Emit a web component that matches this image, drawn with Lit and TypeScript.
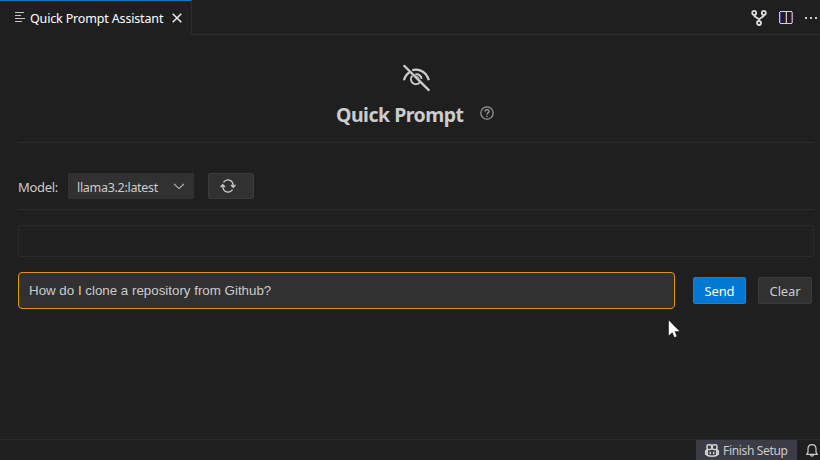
import { LitElement, html, css } from "lit";
import { customElement } from "lit/decorators.js";

@customElement("app-root")
export class AppRoot extends LitElement {
  static styles = css`
    :host {
      display: flex;
      flex-direction: column;
      position: relative;
      width: 820px;
      height: 460px;
      overflow: hidden;
      background: #1f1f1f;
      color: #ccc;
      font: 13px/18px "Noto Sans", "Open Sans", sans-serif;
      white-space: nowrap;
    }
    * { box-sizing: border-box; }
    svg { display: block; flex: none; overflow: visible; }
    .tabs { display: flex; height: 35px; flex: none; }
    .tab {
      display: flex;
      align-items: center;
      width: 192px;
      padding-left: 15px;
      border-top: 1px solid #0078d4;
      border-right: 1px solid #2b2b2b;
      color: #fff;
    }
    .tab-icon { margin-bottom: 2px; }
    .tab-name { width: 134px; margin-left: 5px; padding-top: 2px; font-size: 12.5px; letter-spacing: -0.16px; }
    .close { margin-left: 8px; }
    .actions {
      display: flex;
      flex: 1;
      justify-content: flex-end;
      align-items: center;
      gap: 12px;
      padding: 1px 2px 0 0;
      border-bottom: 1px solid #2b2b2b;
    }
    .main { flex: 1; padding: 29px 6px 0 18px; }
    .logo { margin-left: 385px; }
    .heading { display: flex; margin: 9px 0 0 318px; height: 28px; align-items: center; }
    h1 { margin: 0; width: 144px; font-size: 19.5px; line-height: 28px; font-weight: 700; letter-spacing: -0.5px; }
    .help { margin-bottom: 4px; }
    .rule { height: 1px; background: #2b2b2b; }
    .heading + .rule { margin-top: 13px; }
    .model { display: flex; align-items: center; height: 26px; margin: 30px 0 10px; }
    .model-label { width: 50px; letter-spacing: -0.3px; padding-top: 2px; }
    .select {
      display: flex;
      justify-content: space-between;
      align-items: center;
      width: 126px;
      height: 26px;
      padding: 0 9px;
      background: #313131;
    }
    .select span { font-size: 12.5px; letter-spacing: -0.3px; padding-top: 3px; }
    .button {
      display: flex;
      align-items: center;
      justify-content: center;
      height: 27px;
      border: 1px solid #3c3c3c;
      border-radius: 2px;
      background: #313131;
      padding-top: 1px;
      letter-spacing: -0.15px;
    }
    .refresh { width: 46px; height: 26px; margin-left: 14px; padding: 0 6px 0 0; }
    .answer { height: 32px; margin-top: 15px; border: 1px solid #2b2b2b; border-radius: 3px; }
    .ask { display: flex; align-items: center; margin-top: 15px; }
    .question {
      width: 657px;
      height: 37px;
      padding: 0 10px;
      border: 1px solid #e69500;
      border-radius: 4px;
      background: #313131;
      font: 13.33px/35px "Liberation Sans", Arial, sans-serif;
    }
    .send { width: 53px; margin-left: 18px; background: #0078d4; border-color: #1683d8; color: #fff; }
    .clear { width: 54px; margin-left: 12px; }
    .status {
      display: flex;
      justify-content: flex-end;
      height: 21px;
      border-top: 1px solid #2b2b2b;
      font-size: 12px;
    }
    .setup { display: flex; align-items: center; width: 101px; padding-left: 9px; background: #3b3c45; }
    .setup span { margin-left: 4px; padding-top: 2px; letter-spacing: -0.33px; }
    .bell { margin: 4px 2px 0 9px; }
    .cursor { position: absolute; left: 668px; top: 320px; }
  `;

  render() {
    return html`
      <div class="tabs">
        <div class="tab">
          <svg class="tab-icon" width="10" height="10" viewBox="0 0 10 10" stroke="#c5c5c5" shape-rendering="crispEdges"><path d="M0 .5h9M0 3.5h6M0 6.5h10M0 9.5h7" /></svg>
          <span class="tab-name">Quick Prompt Assistant</span>
          <svg class="close" width="10" height="10" viewBox="0 0 10 10" stroke="#eee" stroke-width="1.5"><path d="M.7.7l8.6 8.6M9.3.7L.7 9.3" /></svg>
        </div>
        <div class="actions">
          <svg width="16" height="16" viewBox="0 0 16 16" fill="none" stroke="#ddd" stroke-width="1.8"><circle cx="3.2" cy="2.9" r="2" /><circle cx="12.8" cy="2.9" r="2" /><circle cx="8" cy="13" r="2" /><path d="M3.5 5v1.2L8 9.2l4.5-3V5M8 9v2" /></svg>
          <svg width="14" height="14" viewBox="0 0 14 14" fill="none"><path d="M1 .5h12M1 12.5h12" stroke="#d4d4d4" /><path d="M.5 1v11M7.5 1v11" stroke="#e0b8dc" /><path d="M1.5 1v11M6.5 1v11M12.5 1v11" stroke="#4a3aa8" /><path d="M13.3 1v11" stroke="#e0b8dc" /></svg>
          <svg width="13" height="4" viewBox="0 0 13 4" fill="#ccc"><path d="M0 1h2v2H0zM5 1h2v2H5zM10 1h2v2h-2z" /></svg>
        </div>
      </div>
      <div class="main">
        <svg class="logo" width="27" height="28" viewBox="0 0 27 28" fill="none" stroke="#ccc" stroke-width="2.3">
          <path d="M.9 16.3C2.2 11.5 4.5 9.4 6.7 8.2M9.3 6.2C16.5 4.3 23.7 8 25.8 16.3" />
          <path d="M9.2 11.8a5 5 0 1 0 7.6 6.6M12.2 10.6c3-1 6.1.9 6.4 4.3" stroke-width="2" />
          <path d="M12.7 12.7c1.2-.7 3.2.2 3.5 2" stroke-width="1" />
          <path d="M.7 1.2l25.6 25.4" />
        </svg>
        <div class="heading">
          <h1>Quick Prompt</h1>
          <svg class="help" width="14" height="14" viewBox="0 0 14 14" fill="none" stroke="#969696" stroke-width="1.3"><circle cx="7" cy="7" r="6.2" /><path d="M5 5.5C5.1 3.2 9 3.2 9 5.4 9 6.9 7 6.8 7 8.4M7 9.7V11" stroke-width="1.5" /></svg>
        </div>
        <div class="rule"></div>
        <div class="model">
          <span class="model-label">Model:</span>
          <div class="select">
            <span>llama3.2:latest</span>
            <svg width="12" height="7" viewBox="0 0 12 7" fill="none" stroke="#bbb" stroke-width="1.1"><path d="M1 .8l5 4.8 5-4.8" /></svg>
          </div>
          <div class="button refresh">
            <svg width="16" height="14" viewBox="0 0 16 14" fill="none" stroke="#ccc" stroke-width="1.35"><path d="M3.4 3.3C6.3-.4 13-.3 13.3 7.2M12.6 10.7C9.7 14.4 3 14.3 2.7 6.8M.5 8.1l2.2-2.3L5 8.1M11 5.9l2.3 2.3 2.2-2.3" /></svg>
          </div>
        </div>
        <div class="rule"></div>
        <div class="answer"></div>
        <div class="ask">
          <div class="question">How do I clone a repository from Github?</div>
          <div class="button send">Send</div>
          <div class="button clear">Clear</div>
        </div>
      </div>
      <div class="status">
        <div class="setup">
          <svg width="14" height="13" viewBox="0 0 14 13" fill="none" stroke="#d4d4d4" stroke-width="1.5"><rect x="2" y=".8" width="4.7" height="4.8" rx="1.7" /><rect x="7.3" y=".8" width="4.7" height="4.8" rx="1.7" /><path d="M2 5.5L.7 7v3c2.5 3 10.1 3 12.6 0V7L12 5.5M2.3 6v4.7M11.7 6v4.7M5.3 7.8v2.4M8.7 7.8v2.4" /></svg>
          <span>Finish Setup</span>
        </div>
        <svg class="bell" width="12" height="13" viewBox="0 0 12 13" fill="none" stroke="#ccc" stroke-width="1.2"><path d="M2 8V4.8C2 -.8 10 -.8 10 4.8V8l1.2 2.3H.8zM4.5 10.7c.3 1.8 2.7 1.8 3 0" /></svg>
      </div>
      <svg class="cursor" width="12" height="19" viewBox="0 0 12 19"><path d="M.8.6v14.8l3.5-3.2 2.2 5 2.2-1-2.1-4.9h4.8z" fill="#fff" /></svg>
    `;
  }
}
